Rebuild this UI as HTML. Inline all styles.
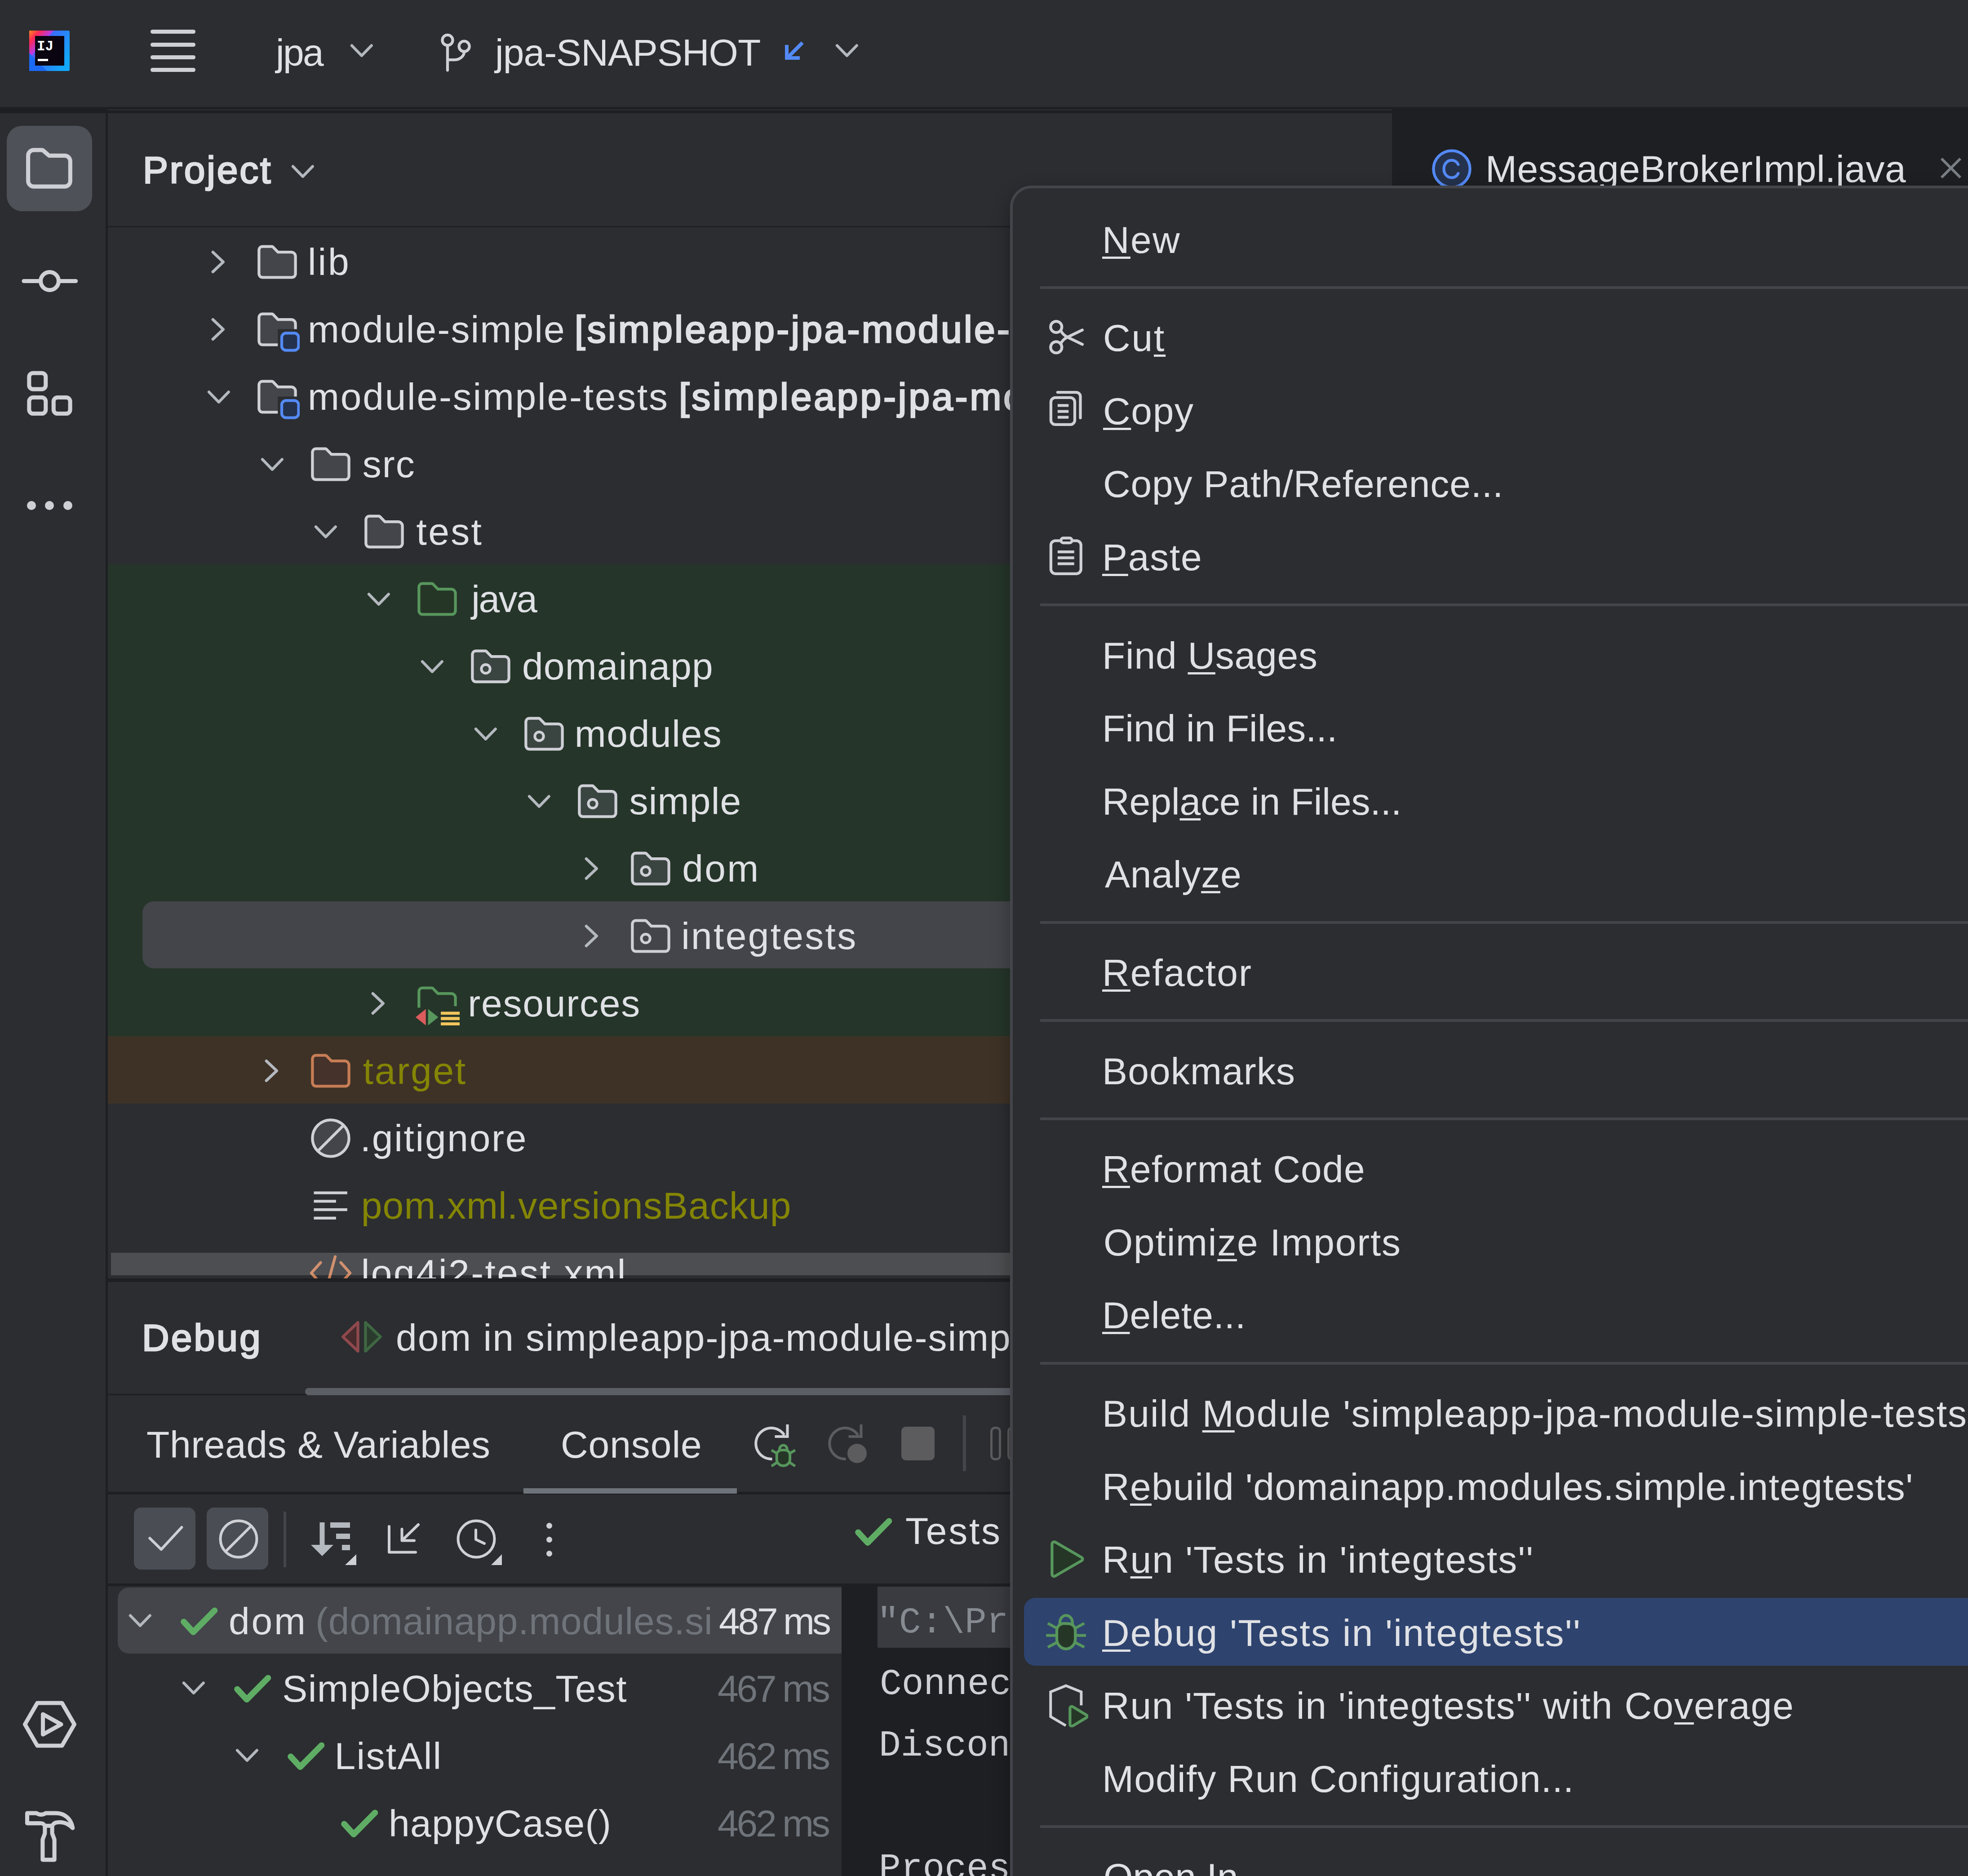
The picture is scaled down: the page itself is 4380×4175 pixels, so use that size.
<!DOCTYPE html>
<html lang="en"><head><meta charset="utf-8"><title>jpa</title><style>
html,body{margin:0;padding:0;}
body{width:4380px;height:4175px;background:#2b2d30;overflow:hidden;position:relative;font-family:"Liberation Sans",sans-serif;}
.a{position:absolute;}
.t{white-space:pre;}
.m{font-family:"Liberation Mono",monospace;}
.c{position:absolute;overflow:hidden;}
u{text-decoration:underline;text-decoration-thickness:5px;text-underline-offset:8px;text-decoration-skip-ink:none;}
</style></head>
<body>
<div class="a" style="left:0px;top:0px;width:4380px;height:238px;background:#2b2d30;"></div>
<div class="a" style="left:3098px;top:238px;width:1282px;height:400px;background:#1e1f22;"></div>
<div class="a" style="left:0px;top:238px;width:3098px;height:14px;background:#1e1f22;"></div>
<div class="a" style="left:240px;top:243px;width:2858px;height:3px;background:#292b2e;"></div>
<svg class="a" style="left:65px;top:68px" width="90" height="90" viewBox="0 0 90 90">
<defs><linearGradient id="lg1" x1="0" y1="0" x2="1" y2="1"><stop offset="0" stop-color="#ff8a1e"/><stop offset="0.22" stop-color="#fe2857"/><stop offset="0.5" stop-color="#b03df0"/><stop offset="1" stop-color="#1e7ffa"/></linearGradient>
<linearGradient id="lg2" x1="0" y1="0" x2="1" y2="0.6"><stop offset="0" stop-color="#c238e8"/><stop offset="0.45" stop-color="#3a6cf8"/><stop offset="1" stop-color="#12a6fb"/></linearGradient></defs>
<rect x="0" y="0" width="90" height="90" rx="3" fill="url(#lg2)"/>
<path d="M0 0H55L0 62Z" fill="url(#lg1)"/>
<path d="M0 50L0 90L40 90Z" fill="#1a6af5"/>
<rect x="13" y="12" width="65" height="66" fill="#0b0512"/>
<rect x="19" y="63" width="23" height="5" fill="#fff"/>
<text x="17" y="44" font-family="Liberation Mono, monospace" font-weight="bold" font-size="31" fill="#fff">IJ</text>
</svg>
<div class="a" style="left:335px;top:65.5px;width:100px;height:9px;background:#ced0d6;border-radius:4.5px;"></div>
<div class="a" style="left:335px;top:94.5px;width:100px;height:9px;background:#ced0d6;border-radius:4.5px;"></div>
<div class="a" style="left:335px;top:122.5px;width:100px;height:9px;background:#ced0d6;border-radius:4.5px;"></div>
<div class="a" style="left:335px;top:150.5px;width:100px;height:9px;background:#ced0d6;border-radius:4.5px;"></div>
<div class="a t" id="tb_jpa" style="left:614.0px;top:66.9px;font-size:84px;line-height:101px;color:#dfe1e5;letter-spacing:-2.69px;">jpa</div>
<svg class="a" style="left:753px;top:62px;" width="100" height="100" viewBox="0 0 16 16" fill="none"><path d="M11.8 6.3L8.3 9.9L4.8 6.3" stroke="#b4b8bf" stroke-linecap="round" stroke-linejoin="round"/></svg>
<svg class="a" style="left:965px;top:65px;" width="100" height="100" viewBox="0 0 16 16" fill="none"><circle cx="4.96" cy="3.9" r="1.85" stroke="#ced0d6"/><circle cx="10.9" cy="6.1" r="1.85" stroke="#ced0d6"/><path d="M4.96 5.8V14.6M4.96 10.9H7.4C9.3 10.9 10.9 9.6 10.9 8" stroke="#ced0d6" stroke-linecap="round"/></svg>
<div class="a t" id="tb_snap" style="left:1102.0px;top:66.9px;font-size:84px;line-height:101px;color:#dfe1e5;letter-spacing:-0.99px;">jpa-SNAPSHOT</div>
<svg class="a" style="left:1738px;top:82px;" width="60" height="60" viewBox="0 0 60 60" fill="none"><path d="M48 13L14 47M13 18V47H42" stroke="#548af7" stroke-width="8" fill="none"/></svg>
<svg class="a" style="left:1833px;top:62px;" width="100" height="100" viewBox="0 0 16 16" fill="none"><path d="M11.8 6.3L8.3 9.9L4.8 6.3" stroke="#b4b8bf" stroke-linecap="round" stroke-linejoin="round"/></svg>
<svg class="a" style="left:3181px;top:326px;" width="100" height="100" viewBox="0 0 16 16" fill="none"><circle cx="8" cy="8" r="6.5" fill="#25324d" stroke="#548af7"/><path d="M10.3 9.6C9.9 10.5 9 11.1 8 11.1C6.4 11.1 5.2 9.8 5.2 8C5.2 6.2 6.4 4.9 8 4.9C9 4.9 9.9 5.5 10.3 6.4" stroke="#548af7" stroke-linecap="round"/></svg>
<div class="a t" id="tab_mb" style="left:3306.0px;top:326.4px;font-size:84px;line-height:101px;color:#dfe1e5;letter-spacing:0.54px;">MessageBrokerImpl.java</div>
<svg class="a" style="left:4317px;top:349px;" width="50" height="50" viewBox="0 0 50 50" fill="none"><path d="M4 4L46 46M46 4L4 46" stroke="#7a7e85" stroke-width="6"/></svg>
<div class="a" style="left:0px;top:252px;width:235px;height:3923px;background:#2b2d30;"></div>
<div class="a" style="left:235px;top:238px;width:5px;height:3937px;background:#1e1f22;"></div>
<div class="a" style="left:15px;top:280px;width:190px;height:190px;background:#4e5157;border-radius:34px;"></div>
<svg class="a" style="left:47px;top:312px;" width="125" height="125" viewBox="0 0 20 20" fill="none"><path d="M9.6 5.2L10 5.5H15.5C16.6 5.5 17.5 6.4 17.5 7.5V14.5C17.5 15.6 16.6 16.5 15.5 16.5H4.5C3.4 16.5 2.5 15.6 2.5 14.5V5.5C2.5 4.4 3.4 3.5 4.5 3.5H7.3C7.6 3.5 7.8 3.6 8 3.8L9.6 5.2Z" stroke="#ced0d6" stroke-width="1.45" stroke-linejoin="round"/></svg>
<svg class="a" style="left:47.5px;top:562.5px;" width="125" height="125" viewBox="0 0 20 20" fill="none"><circle cx="10" cy="10" r="3.2" stroke="#ced0d6" stroke-width="1.45"/><path d="M0.8 10H6.8M13.2 10H19.3" stroke="#ced0d6" stroke-width="1.45" stroke-linecap="round"/></svg>
<svg class="a" style="left:47.5px;top:813px;" width="125" height="125" viewBox="0 0 20 20" fill="none"><rect x="2.7" y="2.75" width="5.9" height="5.75" rx="1.4" stroke="#ced0d6" stroke-width="1.45"/><rect x="2.7" y="11.45" width="5.9" height="5.75" rx="1.4" stroke="#ced0d6" stroke-width="1.45"/><rect x="11.4" y="11.45" width="5.9" height="5.75" rx="1.4" stroke="#ced0d6" stroke-width="1.45"/></svg>
<div class="a" style="left:59.599999999999994px;top:1115px;width:20px;height:20px;background:#ced0d6;border-radius:10px;"></div>
<div class="a" style="left:100px;top:1115px;width:20px;height:20px;background:#ced0d6;border-radius:10px;"></div>
<div class="a" style="left:140.5px;top:1115px;width:20px;height:20px;background:#ced0d6;border-radius:10px;"></div>
<svg class="a" style="left:47.5px;top:3775px;" width="125" height="125" viewBox="0 0 20 20" fill="none"><path d="M5.6 2.4H14.4L18.8 10L14.4 17.6H5.6L1.2 10Z" stroke="#ced0d6" stroke-width="1.45" stroke-linejoin="round"/><path d="M7.6 6.4L14.1 10L7.6 13.6Z" stroke="#ced0d6" stroke-width="1.45" stroke-linejoin="round"/></svg>
<svg class="a" style="left:47.5px;top:4022px;" width="125" height="125" viewBox="0 0 20 20" fill="none"><path d="M2 2.1H5.3C6.4 2.8 7.5 2.8 8.6 2.1H12.3C15.5 2.1 17.7 4.3 18.2 7.4C16.5 5.7 14.6 5.1 12.6 5.4C11.8 5.5 11.2 6 10.9 6.6H8.3C8 6 7.3 5.6 6.5 5.7H2Z" stroke="#ced0d6" stroke-width="1.45" stroke-linejoin="round"/><path d="M8.3 6.6V9.3L7.5 11.5V18.7H11.7V11.5L10.9 9.3V6.6" stroke="#ced0d6" stroke-width="1.45" stroke-linejoin="round"/></svg>
<div class="a" style="left:240px;top:503px;width:2858px;height:3px;background:#1e1f22;"></div>
<div class="a t" id="proj" style="left:318.0px;top:328.4px;font-size:84px;line-height:101px;color:#dfe1e5;letter-spacing:3.82px;-webkit-text-stroke:3px currentColor;">Project</div>
<svg class="a" style="left:622px;top:331px;" width="100" height="100" viewBox="0 0 16 16" fill="none"><path d="M11.8 6.3L8.3 9.9L4.8 6.3" stroke="#b4b8bf" stroke-linecap="round" stroke-linejoin="round"/></svg>
<div class="c" style="left:240px;top:506px;width:2858px;height:2339px;">
<div class="a" style="left:0px;top:750px;width:2858px;height:1050px;background:#253529;"></div>
<div class="a" style="left:0px;top:1800px;width:2858px;height:150px;background:#3e3226;"></div>
<div class="a" style="left:77px;top:1500px;width:2800px;height:149px;background:#43454a;border-radius:25px;"></div>
<svg class="a" style="left:195.0px;top:27px;" width="100" height="100" viewBox="0 0 16 16" fill="none"><path d="M6.2 11.5L9.9 8L6.2 4.5" stroke="#b4b8bf" stroke-linecap="round" stroke-linejoin="round"/></svg>
<svg class="a" style="left:327.0px;top:27px;" width="100" height="100" viewBox="0 0 16 16" fill="none"><path d="M8.10584 4.34613L8.25344 4.5H8.46667H13C13.8284 4.5 14.5 5.17157 14.5 6V12.1333C14.5 12.9529 13.932 13.5 13.2 13.5H2.8C2.06804 13.5 1.5 12.9529 1.5 12.1333V3.86667C1.5 3.04707 2.06804 2.5 2.8 2.5H6.12083C6.25708 2.5 6.38743 2.55559 6.48173 2.65392L8.10584 4.34613Z" fill="#43454a" stroke="#ced0d6"/></svg>
<div class="a t" id="tr0" style="left:445.0px;top:26.9px;font-size:84px;line-height:101px;color:#dfe1e5;letter-spacing:3.84px;">lib</div>
<svg class="a" style="left:195.0px;top:177px;" width="100" height="100" viewBox="0 0 16 16" fill="none"><path d="M6.2 11.5L9.9 8L6.2 4.5" stroke="#b4b8bf" stroke-linecap="round" stroke-linejoin="round"/></svg>
<svg class="a" style="left:327.0px;top:177px;" width="100" height="100" viewBox="0 0 16 16" fill="none"><path d="M8.2 13.5H2.8C2.07 13.5 1.5 12.95 1.5 12.13V3.87C1.5 3.05 2.07 2.5 2.8 2.5H6.12C6.26 2.5 6.39 2.56 6.48 2.65L8.11 4.35L8.25 4.5H13C13.83 4.5 14.5 5.17 14.5 6V7.9L8.2 7.9Z" fill="#43454a"/><path d="M8.2 13.5H2.8C2.07 13.5 1.5 12.95 1.5 12.13V3.87C1.5 3.05 2.07 2.5 2.8 2.5H6.12C6.26 2.5 6.39 2.56 6.48 2.65L8.11 4.35L8.25 4.5H13C13.83 4.5 14.5 5.17 14.5 6V7.9" stroke="#ced0d6"/><rect x="9.6" y="9.35" width="6" height="6.1" rx="1.5" fill="#25324d" stroke="#548af7"/></svg>
<div class="a t" id="tr1" style="left:445.0px;top:176.9px;font-size:84px;line-height:101px;color:#dfe1e5;letter-spacing:2.13px;">module-simple</div>
<div class="a t" id="tr1b" style="left:1039.0px;top:176.9px;font-size:84px;line-height:101px;color:#dfe1e5;letter-spacing:4.30px;-webkit-text-stroke:3px currentColor;">[simpleapp-jpa-module-simple]</div>
<svg class="a" style="left:195.0px;top:327px;" width="100" height="100" viewBox="0 0 16 16" fill="none"><path d="M11.8 6.3L8.3 9.9L4.8 6.3" stroke="#b4b8bf" stroke-linecap="round" stroke-linejoin="round"/></svg>
<svg class="a" style="left:327.0px;top:327px;" width="100" height="100" viewBox="0 0 16 16" fill="none"><path d="M8.2 13.5H2.8C2.07 13.5 1.5 12.95 1.5 12.13V3.87C1.5 3.05 2.07 2.5 2.8 2.5H6.12C6.26 2.5 6.39 2.56 6.48 2.65L8.11 4.35L8.25 4.5H13C13.83 4.5 14.5 5.17 14.5 6V7.9L8.2 7.9Z" fill="#43454a"/><path d="M8.2 13.5H2.8C2.07 13.5 1.5 12.95 1.5 12.13V3.87C1.5 3.05 2.07 2.5 2.8 2.5H6.12C6.26 2.5 6.39 2.56 6.48 2.65L8.11 4.35L8.25 4.5H13C13.83 4.5 14.5 5.17 14.5 6V7.9" stroke="#ced0d6"/><rect x="9.6" y="9.35" width="6" height="6.1" rx="1.5" fill="#25324d" stroke="#548af7"/></svg>
<div class="a t" id="tr2" style="left:445.0px;top:326.9px;font-size:84px;line-height:101px;color:#dfe1e5;letter-spacing:2.75px;">module-simple-tests</div>
<div class="a t" id="tr2b" style="left:1271.0px;top:326.9px;font-size:84px;line-height:101px;color:#dfe1e5;letter-spacing:4.88px;-webkit-text-stroke:3px currentColor;">[simpleapp-jpa-module-simple-tests]</div>
<svg class="a" style="left:313.75px;top:477px;" width="100" height="100" viewBox="0 0 16 16" fill="none"><path d="M11.8 6.3L8.3 9.9L4.8 6.3" stroke="#b4b8bf" stroke-linecap="round" stroke-linejoin="round"/></svg>
<svg class="a" style="left:445.75px;top:477px;" width="100" height="100" viewBox="0 0 16 16" fill="none"><path d="M8.10584 4.34613L8.25344 4.5H8.46667H13C13.8284 4.5 14.5 5.17157 14.5 6V12.1333C14.5 12.9529 13.932 13.5 13.2 13.5H2.8C2.06804 13.5 1.5 12.9529 1.5 12.1333V3.86667C1.5 3.04707 2.06804 2.5 2.8 2.5H6.12083C6.25708 2.5 6.38743 2.55559 6.48173 2.65392L8.10584 4.34613Z" fill="#43454a" stroke="#ced0d6"/></svg>
<div class="a t" id="tr3" style="left:566.8px;top:476.9px;font-size:84px;line-height:101px;color:#dfe1e5;letter-spacing:2.01px;">src</div>
<svg class="a" style="left:432.5px;top:627px;" width="100" height="100" viewBox="0 0 16 16" fill="none"><path d="M11.8 6.3L8.3 9.9L4.8 6.3" stroke="#b4b8bf" stroke-linecap="round" stroke-linejoin="round"/></svg>
<svg class="a" style="left:564.5px;top:627px;" width="100" height="100" viewBox="0 0 16 16" fill="none"><path d="M8.10584 4.34613L8.25344 4.5H8.46667H13C13.8284 4.5 14.5 5.17157 14.5 6V12.1333C14.5 12.9529 13.932 13.5 13.2 13.5H2.8C2.06804 13.5 1.5 12.9529 1.5 12.1333V3.86667C1.5 3.04707 2.06804 2.5 2.8 2.5H6.12083C6.25708 2.5 6.38743 2.55559 6.48173 2.65392L8.10584 4.34613Z" fill="#43454a" stroke="#ced0d6"/></svg>
<div class="a t" id="tr4" style="left:686.5px;top:626.9px;font-size:84px;line-height:101px;color:#dfe1e5;letter-spacing:3.32px;">test</div>
<svg class="a" style="left:551.25px;top:777px;" width="100" height="100" viewBox="0 0 16 16" fill="none"><path d="M11.8 6.3L8.3 9.9L4.8 6.3" stroke="#b4b8bf" stroke-linecap="round" stroke-linejoin="round"/></svg>
<svg class="a" style="left:683.25px;top:777px;" width="100" height="100" viewBox="0 0 16 16" fill="none"><path d="M8.10584 4.34613L8.25344 4.5H8.46667H13C13.8284 4.5 14.5 5.17157 14.5 6V12.1333C14.5 12.9529 13.932 13.5 13.2 13.5H2.8C2.06804 13.5 1.5 12.9529 1.5 12.1333V3.86667C1.5 3.04707 2.06804 2.5 2.8 2.5H6.12083C6.25708 2.5 6.38743 2.55559 6.48173 2.65392L8.10584 4.34613Z" fill="#253627" stroke="#57965c"/></svg>
<div class="a t" id="tr5" style="left:809.2px;top:776.9px;font-size:84px;line-height:101px;color:#dfe1e5;letter-spacing:-2.46px;">java</div>
<svg class="a" style="left:670.0px;top:927px;" width="100" height="100" viewBox="0 0 16 16" fill="none"><path d="M11.8 6.3L8.3 9.9L4.8 6.3" stroke="#b4b8bf" stroke-linecap="round" stroke-linejoin="round"/></svg>
<svg class="a" style="left:802.0px;top:927px;" width="100" height="100" viewBox="0 0 16 16" fill="none"><path d="M8.10584 4.34613L8.25344 4.5H8.46667H13C13.8284 4.5 14.5 5.17157 14.5 6V12.1333C14.5 12.9529 13.932 13.5 13.2 13.5H2.8C2.06804 13.5 1.5 12.9529 1.5 12.1333V3.86667C1.5 3.04707 2.06804 2.5 2.8 2.5H6.12083C6.25708 2.5 6.38743 2.55559 6.48173 2.65392L8.10584 4.34613Z" fill="#3a4440" stroke="#ced0d6"/><circle cx="6.25" cy="8.9" r="1.55" stroke="#ced0d6" stroke-width="0.95"/></svg>
<div class="a t" id="tr6" style="left:922.0px;top:926.9px;font-size:84px;line-height:101px;color:#dfe1e5;letter-spacing:1.13px;">domainapp</div>
<svg class="a" style="left:788.75px;top:1077px;" width="100" height="100" viewBox="0 0 16 16" fill="none"><path d="M11.8 6.3L8.3 9.9L4.8 6.3" stroke="#b4b8bf" stroke-linecap="round" stroke-linejoin="round"/></svg>
<svg class="a" style="left:920.75px;top:1077px;" width="100" height="100" viewBox="0 0 16 16" fill="none"><path d="M8.10584 4.34613L8.25344 4.5H8.46667H13C13.8284 4.5 14.5 5.17157 14.5 6V12.1333C14.5 12.9529 13.932 13.5 13.2 13.5H2.8C2.06804 13.5 1.5 12.9529 1.5 12.1333V3.86667C1.5 3.04707 2.06804 2.5 2.8 2.5H6.12083C6.25708 2.5 6.38743 2.55559 6.48173 2.65392L8.10584 4.34613Z" fill="#3a4440" stroke="#ced0d6"/><circle cx="6.25" cy="8.9" r="1.55" stroke="#ced0d6" stroke-width="0.95"/></svg>
<div class="a t" id="tr7" style="left:1038.8px;top:1076.9px;font-size:84px;line-height:101px;color:#dfe1e5;letter-spacing:1.58px;">modules</div>
<svg class="a" style="left:907.5px;top:1227px;" width="100" height="100" viewBox="0 0 16 16" fill="none"><path d="M11.8 6.3L8.3 9.9L4.8 6.3" stroke="#b4b8bf" stroke-linecap="round" stroke-linejoin="round"/></svg>
<svg class="a" style="left:1039.5px;top:1227px;" width="100" height="100" viewBox="0 0 16 16" fill="none"><path d="M8.10584 4.34613L8.25344 4.5H8.46667H13C13.8284 4.5 14.5 5.17157 14.5 6V12.1333C14.5 12.9529 13.932 13.5 13.2 13.5H2.8C2.06804 13.5 1.5 12.9529 1.5 12.1333V3.86667C1.5 3.04707 2.06804 2.5 2.8 2.5H6.12083C6.25708 2.5 6.38743 2.55559 6.48173 2.65392L8.10584 4.34613Z" fill="#3a4440" stroke="#ced0d6"/><circle cx="6.25" cy="8.9" r="1.55" stroke="#ced0d6" stroke-width="0.95"/></svg>
<div class="a t" id="tr8" style="left:1160.5px;top:1226.9px;font-size:84px;line-height:101px;color:#dfe1e5;letter-spacing:1.20px;">simple</div>
<svg class="a" style="left:1026.25px;top:1377px;" width="100" height="100" viewBox="0 0 16 16" fill="none"><path d="M6.2 11.5L9.9 8L6.2 4.5" stroke="#b4b8bf" stroke-linecap="round" stroke-linejoin="round"/></svg>
<svg class="a" style="left:1158.25px;top:1377px;" width="100" height="100" viewBox="0 0 16 16" fill="none"><path d="M8.10584 4.34613L8.25344 4.5H8.46667H13C13.8284 4.5 14.5 5.17157 14.5 6V12.1333C14.5 12.9529 13.932 13.5 13.2 13.5H2.8C2.06804 13.5 1.5 12.9529 1.5 12.1333V3.86667C1.5 3.04707 2.06804 2.5 2.8 2.5H6.12083C6.25708 2.5 6.38743 2.55559 6.48173 2.65392L8.10584 4.34613Z" fill="#3a4440" stroke="#ced0d6"/><circle cx="6.25" cy="8.9" r="1.55" stroke="#ced0d6" stroke-width="0.95"/></svg>
<div class="a t" id="tr9" style="left:1278.2px;top:1376.9px;font-size:84px;line-height:101px;color:#dfe1e5;letter-spacing:3.28px;">dom</div>
<svg class="a" style="left:1026.25px;top:1527px;" width="100" height="100" viewBox="0 0 16 16" fill="none"><path d="M6.2 11.5L9.9 8L6.2 4.5" stroke="#b4b8bf" stroke-linecap="round" stroke-linejoin="round"/></svg>
<svg class="a" style="left:1158.25px;top:1527px;" width="100" height="100" viewBox="0 0 16 16" fill="none"><path d="M8.10584 4.34613L8.25344 4.5H8.46667H13C13.8284 4.5 14.5 5.17157 14.5 6V12.1333C14.5 12.9529 13.932 13.5 13.2 13.5H2.8C2.06804 13.5 1.5 12.9529 1.5 12.1333V3.86667C1.5 3.04707 2.06804 2.5 2.8 2.5H6.12083C6.25708 2.5 6.38743 2.55559 6.48173 2.65392L8.10584 4.34613Z" fill="#43454a" stroke="#ced0d6"/><circle cx="6.25" cy="8.9" r="1.55" stroke="#ced0d6" stroke-width="0.95"/></svg>
<div class="a t" id="tr10" style="left:1276.2px;top:1526.9px;font-size:84px;line-height:101px;color:#dfe1e5;letter-spacing:3.27px;">integtests</div>
<svg class="a" style="left:551.25px;top:1677px;" width="100" height="100" viewBox="0 0 16 16" fill="none"><path d="M6.2 11.5L9.9 8L6.2 4.5" stroke="#b4b8bf" stroke-linecap="round" stroke-linejoin="round"/></svg>
<svg class="a" style="left:683.25px;top:1677px;" width="100" height="100" viewBox="0 0 16 16" fill="none"><path d="M14.5 9V6C14.5 5.17 13.83 4.5 13 4.5H8.25L8.11 4.35L6.48 2.65C6.39 2.56 6.26 2.5 6.12 2.5H2.8C2.07 2.5 1.5 3.05 1.5 3.87V9.5" stroke="#57965c"/><path d="M3.95 10V15.85L0.3 12.9Z" fill="#db5c5c"/><path d="M4.75 10V15.85L8.4 12.9Z" fill="#57965c"/><path d="M9.3 11.5H16M9.3 13.4H16M9.3 15.3H16" stroke="#f2c55c" stroke-width="1.1"/></svg>
<div class="a t" id="tr11" style="left:801.2px;top:1676.9px;font-size:84px;line-height:101px;color:#dfe1e5;letter-spacing:1.77px;">resources</div>
<svg class="a" style="left:313.75px;top:1827px;" width="100" height="100" viewBox="0 0 16 16" fill="none"><path d="M6.2 11.5L9.9 8L6.2 4.5" stroke="#b4b8bf" stroke-linecap="round" stroke-linejoin="round"/></svg>
<svg class="a" style="left:445.75px;top:1827px;" width="100" height="100" viewBox="0 0 16 16" fill="none"><path d="M8.10584 4.34613L8.25344 4.5H8.46667H13C13.8284 4.5 14.5 5.17157 14.5 6V12.1333C14.5 12.9529 13.932 13.5 13.2 13.5H2.8C2.06804 13.5 1.5 12.9529 1.5 12.1333V3.86667C1.5 3.04707 2.06804 2.5 2.8 2.5H6.12083C6.25708 2.5 6.38743 2.55559 6.48173 2.65392L8.10584 4.34613Z" fill="#45322b" stroke="#c77d55"/></svg>
<div class="a t" id="tr12" style="left:567.8px;top:1826.9px;font-size:84px;line-height:101px;color:#848504;letter-spacing:2.71px;">target</div>
<svg class="a" style="left:445.75px;top:1977px;" width="100" height="100" viewBox="0 0 16 16" fill="none"><circle cx="8" cy="8" r="6.5" fill="#43454a" stroke="#ced0d6"/><path d="M3.6 12.4L12.4 3.6" stroke="#ced0d6"/></svg>
<div class="a t" id="tr13" style="left:561.8px;top:1976.9px;font-size:84px;line-height:101px;color:#dfe1e5;letter-spacing:2.68px;">.gitignore</div>
<svg class="a" style="left:445.75px;top:2127px;" width="100" height="100" viewBox="0 0 16 16" fill="none"><path d="M2 3.45H13.9M2 6.45H9.9M2 9.45H13.9M2 12.45H9.9" stroke="#ced0d6"/></svg>
<div class="a t" id="tr14" style="left:563.8px;top:2126.9px;font-size:84px;line-height:101px;color:#848504;letter-spacing:1.10px;">pom.xml.versionsBackup</div>
<svg class="a" style="left:445.75px;top:2277px;" width="100" height="100" viewBox="0 0 16 16" fill="none"><path d="M4.4 4.3L1.1 8L4.4 11.7M11.6 4.3L14.9 8L11.6 11.7M9.6 2.2L6.4 13.8" stroke="#c77d55" stroke-linecap="round" stroke-linejoin="round"/></svg>
<div class="a t" id="tr15" style="left:563.8px;top:2276.9px;font-size:84px;line-height:101px;color:#dfe1e5;letter-spacing:3.37px;">log4j2-test.xml</div>
<div class="a" style="left:7px;top:2282px;width:2860px;height:50px;background:rgba(255,255,255,0.16);"></div>
</div>
<div class="a" style="left:240px;top:2845px;width:2858px;height:8px;background:#1e1f22;"></div>
<div class="a t" id="dbg" style="left:316.0px;top:2927.4px;font-size:84px;line-height:101px;color:#dfe1e5;letter-spacing:4.05px;-webkit-text-stroke:3px currentColor;">Debug</div>
<svg class="a" style="left:755px;top:2925px;" width="100" height="100" viewBox="0 0 16 16" fill="none"><path d="M6.65 2.9V13.1L1.3 8Z" fill="#472b2d" stroke="#8f494d" stroke-linejoin="round"/><path d="M9.35 2.9V13.1L14.7 8Z" fill="#2a3b2e" stroke="#3e6742" stroke-linejoin="round"/></svg>
<div class="a t" id="dbgtab" style="left:881.0px;top:2927.4px;font-size:84px;line-height:101px;color:#dfe1e5;letter-spacing:1.95px;width:1368.0px;overflow:hidden;">dom in simpleapp-jpa-module-simple-tests</div>
<div class="a" style="left:240px;top:3102px;width:2858px;height:3px;background:#1e1f22;"></div>
<div class="a" style="left:679px;top:3089px;width:2420px;height:16px;background:#5c5e66;border-radius:8px;"></div>
<div class="a t" id="thr" style="left:326.0px;top:3165.4px;font-size:84px;line-height:101px;color:#dfe1e5;letter-spacing:0.57px;">Threads &amp; Variables</div>
<div class="a t" id="cons" style="left:1248.0px;top:3165.4px;font-size:84px;line-height:101px;color:#dfe1e5;letter-spacing:0.92px;">Console</div>
<div class="a" style="left:240px;top:3320px;width:2858px;height:6px;background:#1e1f22;"></div>
<div class="a" style="left:1165px;top:3312px;width:475px;height:12px;background:#6f737a;"></div>
<svg class="a" style="left:1670.3px;top:3160px;" width="130" height="110" viewBox="1670.3 3160 130 110" fill="none"><path d="M1718.8 3247.0A34.5 34.5 0 1 1 1745.8 3193.5" stroke="#ced0d6" stroke-width="6" stroke-linecap="butt"/><path d="M1752.8 3170V3197H1724.8" stroke="#ced0d6" stroke-width="6"/></svg>
<svg class="a" style="left:1712px;top:3207px;" width="62" height="62" viewBox="0 0 16 16" fill="none"><path d="M4.3 8C4.3 6.3 5.6 5.2 7.3 5.2H8.9C10.6 5.2 11.9 6.3 11.9 8V10.5C11.9 12.6 10.2 14.2 8.1 14.2C6 14.2 4.3 12.6 4.3 10.5Z" fill="#253627" stroke="#57965c" stroke-width="1.5"/><path d="M5.9 5.3V4.9C5.9 3.4 6.9 2.4 8.1 2.4C9.3 2.4 10.3 3.4 10.3 4.9V5.3" stroke="#57965c" stroke-width="1.5"/><path d="M4.6 7.2L1.3 5.2M11.6 7.2L14.9 5.2M4.9 12L1.3 14.4M11.3 12L14.9 14.4" stroke="#57965c" stroke-width="1.5"/></svg>
<svg class="a" style="left:1834px;top:3160px;" width="130" height="110" viewBox="1834 3160 130 110" fill="none"><path d="M1882.5 3247.0A34.5 34.5 0 1 1 1909.5 3193.5" stroke="#5c5c5f" stroke-width="6" stroke-linecap="butt"/><path d="M1916.5 3170V3197H1888.5" stroke="#5c5c5f" stroke-width="6"/></svg>
<div class="a" style="left:1886.3px;top:3212.5px;width:43px;height:43px;background:#5c5c5f;border-radius:22px;"></div>
<div class="a" style="left:2005.5px;top:3175px;width:74.5px;height:75px;background:#5c5c5f;border-radius:10px;"></div>
<div class="a" style="left:2143px;top:3150px;width:7px;height:124px;background:#43454a;"></div>
<svg class="a" style="left:2200px;top:3170px;" width="60" height="85" viewBox="0 0 60 85" fill="none"><rect x="6.5" y="7.5" width="19" height="70" rx="8" stroke="#5c5c5f" stroke-width="5" fill="none"/><rect x="44.5" y="7.5" width="19" height="70" rx="8" stroke="#5c5c5f" stroke-width="5" fill="none"/></svg>
<div class="a" style="left:298px;top:3355px;width:137px;height:138px;background:#4a4d53;border-radius:16px;"></div>
<div class="a" style="left:460px;top:3355px;width:137px;height:138px;background:#4a4d53;border-radius:16px;"></div>
<svg class="a" style="left:298px;top:3355px;" width="137" height="138" viewBox="298 3355 137 138" fill="none"><path d="M333.4 3423.3L358.8 3448.2L404.4 3399" stroke="#ced0d6" stroke-width="6" stroke-linecap="round" stroke-linejoin="round"/></svg>
<svg class="a" style="left:460px;top:3355px;" width="137" height="138" viewBox="460 3355 137 138" fill="none"><circle cx="531" cy="3425" r="40.5" stroke="#ced0d6" stroke-width="6"/><path d="M503 3452L559 3396" stroke="#ced0d6" stroke-width="6"/></svg>
<div class="a" style="left:631px;top:3364px;width:6px;height:124px;background:#43454a;"></div>
<svg class="a" style="left:680px;top:3375px;" width="125" height="120" viewBox="680 3375 125 120" fill="none"><path d="M717 3388V3445" stroke="#b4b8bf" stroke-width="11"/><path d="M692 3438H742L717 3463Z" fill="#b4b8bf"/><path d="M735 3394H779M748 3419H779M761 3444H779" stroke="#b4b8bf" stroke-width="12"/><path d="M793 3459V3483H768Z" fill="#ced0d6"/></svg>
<svg class="a" style="left:850px;top:3380px;" width="100" height="90" viewBox="850 3380 100 90" fill="none"><path d="M866 3397V3454.5H925" stroke="#ced0d6" stroke-width="6" stroke-linecap="round" stroke-linejoin="round"/><path d="M931 3393L895 3428M894.5 3403V3428.5H922" stroke="#ced0d6" stroke-width="6" stroke-linecap="round" stroke-linejoin="round"/></svg>
<svg class="a" style="left:1010px;top:3375px;" width="115" height="115" viewBox="1010 3375 115 115" fill="none"><circle cx="1060" cy="3425" r="40.5" stroke="#ced0d6" stroke-width="6"/><path d="M1059 3405V3426L1078 3435" stroke="#ced0d6" stroke-width="6" stroke-linecap="round" stroke-linejoin="round"/><path d="M1117 3459V3483H1093Z" fill="#ced0d6"/></svg>
<div class="a" style="left:1216.0px;top:3388.5px;width:13px;height:13px;background:#ced0d6;border-radius:7px;"></div>
<div class="a" style="left:1216.0px;top:3419.5px;width:13px;height:13px;background:#ced0d6;border-radius:7px;"></div>
<div class="a" style="left:1216.0px;top:3450.5px;width:13px;height:13px;background:#ced0d6;border-radius:7px;"></div>
<svg class="a" style="left:1893px;top:3357px;" width="100" height="100" viewBox="0 0 16 16" fill="none"><path d="M2.7 8.5L6.1 12.2L13.7 4.5" stroke="#5fad65" stroke-width="2.15" stroke-linecap="round" stroke-linejoin="round"/></svg>
<div class="a t" id="tests" style="left:2015.0px;top:3357.4px;font-size:84px;line-height:101px;color:#dfe1e5;letter-spacing:3.74px;width:226.0px;overflow:hidden;">Tests passed: 1</div>
<div class="a" style="left:240px;top:3524px;width:2858px;height:6px;background:#1e1f22;"></div>
<div class="a" style="left:1873px;top:3530px;width:1300px;height:645px;background:#1e1f22;"></div>
<div class="a" style="left:1953px;top:3531px;width:1200px;height:136px;background:#393b40;"></div>
<div class="a t m" id="c1" style="left:1952.0px;top:3562.3px;font-size:81.25px;line-height:98px;color:#868a91;">"C:\Program Files\Java\jdk-11\bin\java.exe" ...</div>
<div class="a t m" id="c2" style="left:1958.0px;top:3699.3px;font-size:81.25px;line-height:98px;color:#ced0d6;">Connected to the target VM, address: '127.0.0.1:51123'</div>
<div class="a t m" id="c3" style="left:1956.0px;top:3836.3px;font-size:81.25px;line-height:98px;color:#ced0d6;">Disconnected from the target VM, address: '127.0.0.1:51123'</div>
<div class="a t m" id="c4" style="left:1956.0px;top:4110.3px;font-size:81.25px;line-height:98px;color:#ced0d6;">Process finished with exit code 0</div>
<div class="a" style="left:262px;top:3533px;width:1611px;height:147px;background:#43454a;border-radius:25px;"></div>
<div class="a" style="left:1848px;top:3533px;width:25px;height:147px;background:#43454a;"></div>
<svg class="a" style="left:260px;top:3556px;" width="100" height="100" viewBox="0 0 16 16" fill="none"><path d="M11.8 6.3L8.3 9.9L4.8 6.3" stroke="#b4b8bf" stroke-linecap="round" stroke-linejoin="round"/></svg>
<svg class="a" style="left:392px;top:3556px;" width="100" height="100" viewBox="0 0 16 16" fill="none"><path d="M2.7 8.5L6.1 12.2L13.7 4.5" stroke="#5fad65" stroke-width="2.15" stroke-linecap="round" stroke-linejoin="round"/></svg>
<div class="a t" id="tt0" style="left:509.0px;top:3558.4px;font-size:84px;line-height:101px;color:#dfe1e5;letter-spacing:3.78px;">dom</div>
<div class="a t" id="tt0g" style="left:702.0px;top:3558.4px;font-size:84px;line-height:101px;color:#6f737a;letter-spacing:0.76px;width:878.0px;overflow:hidden;">(domainapp.modules.simple.dom)</div>
<div class="a t" id="tm0" style="left:1600.0px;top:3558.4px;font-size:84px;line-height:101px;color:#dfe1e5;letter-spacing:-4.22px;">487</div>
<div class="a t" id="tms0" style="left:1743.0px;top:3558.4px;font-size:84px;line-height:101px;color:#dfe1e5;letter-spacing:-4.97px;">ms</div>
<svg class="a" style="left:379px;top:3706px;" width="100" height="100" viewBox="0 0 16 16" fill="none"><path d="M11.8 6.3L8.3 9.9L4.8 6.3" stroke="#b4b8bf" stroke-linecap="round" stroke-linejoin="round"/></svg>
<svg class="a" style="left:511px;top:3706px;" width="100" height="100" viewBox="0 0 16 16" fill="none"><path d="M2.7 8.5L6.1 12.2L13.7 4.5" stroke="#5fad65" stroke-width="2.15" stroke-linecap="round" stroke-linejoin="round"/></svg>
<div class="a t" id="tt1" style="left:628.3px;top:3708.4px;font-size:84px;line-height:101px;color:#dfe1e5;letter-spacing:1.41px;">SimpleObjects_Test</div>
<div class="a t" id="tm1" style="left:1597.0px;top:3708.4px;font-size:84px;line-height:101px;color:#6f737a;letter-spacing:-4.22px;">467</div>
<div class="a t" id="tms1" style="left:1741.0px;top:3708.4px;font-size:84px;line-height:101px;color:#6f737a;letter-spacing:-4.97px;">ms</div>
<svg class="a" style="left:498px;top:3856px;" width="100" height="100" viewBox="0 0 16 16" fill="none"><path d="M11.8 6.3L8.3 9.9L4.8 6.3" stroke="#b4b8bf" stroke-linecap="round" stroke-linejoin="round"/></svg>
<svg class="a" style="left:630px;top:3856px;" width="100" height="100" viewBox="0 0 16 16" fill="none"><path d="M2.7 8.5L6.1 12.2L13.7 4.5" stroke="#5fad65" stroke-width="2.15" stroke-linecap="round" stroke-linejoin="round"/></svg>
<div class="a t" id="tt2" style="left:744.6px;top:3858.4px;font-size:84px;line-height:101px;color:#dfe1e5;letter-spacing:2.27px;">ListAll</div>
<div class="a t" id="tm2" style="left:1597.0px;top:3858.4px;font-size:84px;line-height:101px;color:#6f737a;letter-spacing:-4.22px;">462</div>
<div class="a t" id="tms2" style="left:1741.0px;top:3858.4px;font-size:84px;line-height:101px;color:#6f737a;letter-spacing:-4.97px;">ms</div>
<svg class="a" style="left:749px;top:4006px;" width="100" height="100" viewBox="0 0 16 16" fill="none"><path d="M2.7 8.5L6.1 12.2L13.7 4.5" stroke="#5fad65" stroke-width="2.15" stroke-linecap="round" stroke-linejoin="round"/></svg>
<div class="a t" id="tt3" style="left:864.9px;top:4008.4px;font-size:84px;line-height:101px;color:#dfe1e5;letter-spacing:1.41px;">happyCase()</div>
<div class="a t" id="tm3" style="left:1597.0px;top:4008.4px;font-size:84px;line-height:101px;color:#6f737a;letter-spacing:-4.22px;">462</div>
<div class="a t" id="tms3" style="left:1741.0px;top:4008.4px;font-size:84px;line-height:101px;color:#6f737a;letter-spacing:-4.97px;">ms</div>
<div class="a" style="left:2248px;top:413px;width:2300px;height:3900px;background:#2b2d30;border:6px solid #43454a;border-radius:48px;box-shadow:0 14px 40px 0 rgba(0,0,0,0.32);box-sizing:border-box;"></div>
<div class="a t" id="m0" style="left:2453.0px;top:483.6px;font-size:84px;line-height:101px;color:#dfe1e5;letter-spacing:2.31px;"><u>N</u>ew</div>
<div class="a" style="left:2315px;top:637.0px;width:2100px;height:6px;background:#43454a;"></div>
<svg class="a" style="left:2322px;top:700.5px;" width="100" height="100" viewBox="0 0 16 16" fill="none"><circle cx="4.6" cy="4.25" r="2" stroke="#ced0d6"/><circle cx="4.6" cy="11.5" r="2" stroke="#ced0d6"/><path d="M6.2 5.5Q6.9 7 8.6 7.9L13.9 10.45M6.2 10.3Q6.9 8.7 8.6 7.9L13.9 5.35" stroke="#ced0d6" stroke-linecap="round" stroke-linejoin="round"/></svg>
<div class="a t" id="m1" style="left:2455.0px;top:702.4px;font-size:84px;line-height:101px;color:#dfe1e5;letter-spacing:2.81px;">Cu<u>t</u></div>
<svg class="a" style="left:2322px;top:863.0px;" width="100" height="100" viewBox="0 0 16 16" fill="none"><rect x="2.7" y="3.5" width="8.5" height="9.6" rx="1.6" stroke="#ced0d6"/><path d="M5.1 1.6H11.7C12.5 1.6 13.2 2.3 13.2 3.1V10.7" stroke="#ced0d6" stroke-linecap="round"/><path d="M5.1 6.3H9M5.1 8.4H9M5.1 10.5H9" stroke="#ced0d6"/></svg>
<div class="a t" id="m2" style="left:2455.0px;top:864.9px;font-size:84px;line-height:101px;color:#dfe1e5;letter-spacing:1.63px;"><u>C</u>opy</div>
<div class="a t" id="m3" style="left:2455.0px;top:1027.4px;font-size:84px;line-height:101px;color:#dfe1e5;letter-spacing:0.82px;">Copy Path/Reference...</div>
<svg class="a" style="left:2322px;top:1188.0px;" width="100" height="100" viewBox="0 0 16 16" fill="none"><rect x="2.7" y="2.45" width="10.7" height="11.75" rx="1.6" stroke="#ced0d6"/><rect x="6.3" y="1.5" width="3.9" height="1.7" rx="0.8" fill="#2b2d30" stroke="#ced0d6"/><path d="M5.1 6.4H11M5.1 8.55H11M5.1 10.65H11" stroke="#ced0d6"/></svg>
<div class="a t" id="m4" style="left:2453.0px;top:1189.9px;font-size:84px;line-height:101px;color:#dfe1e5;letter-spacing:1.73px;"><u>P</u>aste</div>
<div class="a" style="left:2315px;top:1343.25px;width:2100px;height:6px;background:#43454a;"></div>
<div class="a t" id="m5" style="left:2453.0px;top:1408.6px;font-size:84px;line-height:101px;color:#dfe1e5;letter-spacing:0.74px;">Find <u>U</u>sages</div>
<div class="a t" id="m6" style="left:2453.0px;top:1571.1px;font-size:84px;line-height:101px;color:#dfe1e5;letter-spacing:0.03px;">Find in Files...</div>
<div class="a t" id="m7" style="left:2453.0px;top:1733.6px;font-size:84px;line-height:101px;color:#dfe1e5;letter-spacing:-0.07px;">Repl<u>a</u>ce in Files...</div>
<div class="a t" id="m8" style="left:2459.0px;top:1896.1px;font-size:84px;line-height:101px;color:#dfe1e5;letter-spacing:0.81px;">Analy<u>z</u>e</div>
<div class="a" style="left:2315px;top:2049.5px;width:2100px;height:6px;background:#43454a;"></div>
<div class="a t" id="m9" style="left:2453.0px;top:2114.9px;font-size:84px;line-height:101px;color:#dfe1e5;letter-spacing:2.07px;"><u>R</u>efactor</div>
<div class="a" style="left:2315px;top:2268.25px;width:2100px;height:6px;background:#43454a;"></div>
<div class="a t" id="m10" style="left:2453.0px;top:2333.6px;font-size:84px;line-height:101px;color:#dfe1e5;letter-spacing:1.11px;">Bookmarks</div>
<div class="a" style="left:2315px;top:2487.0px;width:2100px;height:6px;background:#43454a;"></div>
<div class="a t" id="m11" style="left:2453.0px;top:2552.4px;font-size:84px;line-height:101px;color:#dfe1e5;letter-spacing:1.26px;"><u>R</u>eformat Code</div>
<div class="a t" id="m12" style="left:2456.0px;top:2714.9px;font-size:84px;line-height:101px;color:#dfe1e5;letter-spacing:1.75px;">Optimi<u>z</u>e Imports</div>
<div class="a t" id="m13" style="left:2453.0px;top:2877.4px;font-size:84px;line-height:101px;color:#dfe1e5;letter-spacing:0.81px;"><u>D</u>elete...</div>
<div class="a" style="left:2315px;top:3030.75px;width:2100px;height:6px;background:#43454a;"></div>
<div class="a t" id="m14" style="left:2453.0px;top:3096.1px;font-size:84px;line-height:101px;color:#dfe1e5;letter-spacing:2.10px;">Build <u>M</u>odule 'simpleapp-jpa-module-simple-tests'</div>
<div class="a t" id="m15" style="left:2453.0px;top:3258.6px;font-size:84px;line-height:101px;color:#dfe1e5;letter-spacing:1.33px;">R<u>e</u>build 'domainapp.modules.simple.integtests'</div>
<svg class="a" style="left:2322px;top:3419.25px;" width="100" height="100" viewBox="0 0 16 16" fill="none"><path d="M3.1 2.8V13.5C3.1 14.1 3.7 14.5 4.3 14.1L13.6 8.7C14.1 8.4 14.1 7.8 13.6 7.5L4.3 2.1C3.7 1.8 3.1 2.2 3.1 2.8Z" fill="#253627" stroke="#57965c"/></svg>
<div class="a t" id="m16" style="left:2453.0px;top:3421.1px;font-size:84px;line-height:101px;color:#dfe1e5;letter-spacing:1.92px;">R<u>u</u>n 'Tests in 'integtests''</div>
<div class="a" style="left:2279px;top:3555.75px;width:2200px;height:151px;background:#2e436e;border-radius:25px;"></div>
<svg class="a" style="left:2322px;top:3581.75px;" width="100" height="100" viewBox="0 0 16 16" fill="none"><path d="M4.8 7.5C4.8 6.1 5.9 5 7.3 5H8.9C10.3 5 11.4 6.1 11.4 7.5V10.5C11.4 12.4 9.9 14 8.1 14C6.3 14 4.8 12.4 4.8 10.5Z" fill="#253627" stroke="#57965c" stroke-width="1"/><path d="M5.9 5.3V4.6C5.9 3.2 6.9 2.1 8.1 2.1C9.3 2.1 10.35 3.2 10.35 4.6V5.3" stroke="#57965c" stroke-width="1"/><path d="M4.8 9.2H1M11.4 9.2H15.2M4.9 6.7L1.6 4.9M11.3 6.7L14.6 4.9M4.9 11.7L1.6 13.4M11.3 11.7L14.6 13.4" stroke="#57965c" stroke-width="1"/></svg>
<div class="a t" id="m17" style="left:2453.0px;top:3583.6px;font-size:84px;line-height:101px;color:#dfe1e5;letter-spacing:2.19px;"><u>D</u>ebug 'Tests in 'integtests''</div>
<svg class="a" style="left:2322px;top:3744.25px;" width="100" height="100" viewBox="0 0 16 16" fill="none"><path d="M13.5 8.2V3.4L8.05 1.2L2.6 3.4V12.2L8 15.4" stroke="#ced0d6" stroke-width="0.95"/><path d="M9.5 9.3V14.9C9.5 15.5 10 15.8 10.5 15.5L15.3 12.6C15.8 12.3 15.8 11.9 15.3 11.6L10.5 8.7C10 8.4 9.5 8.7 9.5 9.3Z" fill="#253627" stroke="#57965c"/></svg>
<div class="a t" id="m18" style="left:2453.0px;top:3746.1px;font-size:84px;line-height:101px;color:#dfe1e5;letter-spacing:1.73px;">Run 'Tests in 'integtests'' with Co<u>v</u>erage</div>
<div class="a t" id="m19" style="left:2453.0px;top:3908.6px;font-size:84px;line-height:101px;color:#dfe1e5;letter-spacing:1.21px;">Modify Run Configuration...</div>
<div class="a" style="left:2315px;top:4062.0px;width:2100px;height:6px;background:#43454a;"></div>
<div class="a t" id="m20" style="left:2456.0px;top:4127.4px;font-size:84px;line-height:101px;color:#dfe1e5;letter-spacing:0.14px;">Open In</div>
</body></html>
